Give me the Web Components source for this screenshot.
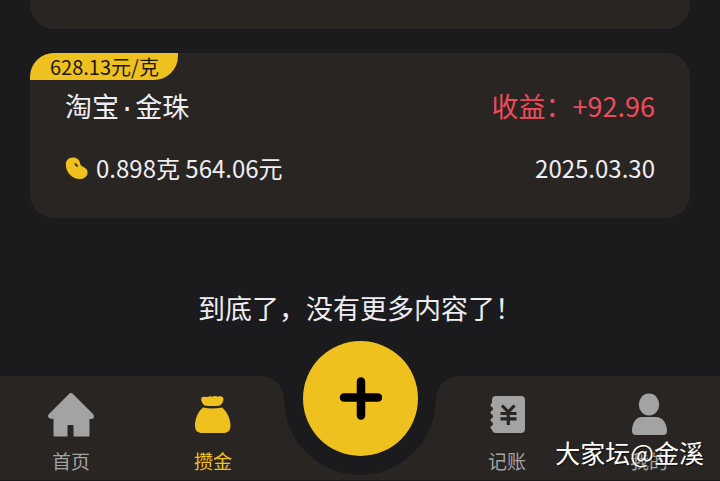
<!DOCTYPE html>
<html lang="zh-CN">
<head>
<meta charset="utf-8">
<meta name="viewport" content="width=device-width, initial-scale=1">
<title>攒金</title>
<style>
  html { background: #1b1b1e; }
  body {
    margin: 0;
    font-family: "Noto Sans CJK SC", sans-serif;
    color: #efedf2;
    --card: #292522;
    --gold: #eec11f;
    --muted: #a3a3a3;
  }
</style>
</head>
<body>
<gold-app>
  <gold-card continued></gold-card>
  <gold-card>
    <span slot="price">628.13元/克</span>
    <span slot="name">淘宝·金珠</span>
    <span slot="profit">收益：+92.96</span>
    <span slot="amount">0.898克 564.06元</span>
    <time slot="date" datetime="2025-03-30">2025.03.30</time>
  </gold-card>
  <list-end>到底了，没有更多内容了！</list-end>
  <tab-bar slot="nav">
    <tab-item icon="home">首页</tab-item>
    <tab-item icon="bag" active>攒金</tab-item>
    <add-button></add-button>
    <tab-item icon="ledger">记账</tab-item>
    <tab-item icon="person">我的</tab-item>
  </tab-bar>
  <water-mark slot="mark">大家坛@金溪</water-mark>
</gold-app>

<script>
const define = (name, html, setup) => {
  const template = document.createElement('template');
  template.innerHTML = html;
  customElements.define(name, class extends HTMLElement {
    constructor() {
      super();
      this.attachShadow({ mode: 'open' }).append(template.content.cloneNode(true));
    }
    connectedCallback() { if (setup) setup(this, this.shadowRoot); }
  });
};

define('gold-app', `
  <style>
    :host { display: flex; flex-direction: column; min-height: 100vh; position: relative; }
    main { flex: 1; display: flex; flex-direction: column; gap: 24px; padding: 0 30px 24px; }
  </style>
  <main><slot></slot></main>
  <slot name="nav"></slot>
  <slot name="mark"></slot>`);

define('gold-card', `
  <style>
    :host { display: block; background: var(--card); border-radius: 24px; overflow: hidden; padding-bottom: 32px; }
    :host([continued]) { border-radius: 0 0 24px 24px; padding-bottom: 29px; }
    :host([continued]) > * { display: none; }
    .badge { display: flex; width: fit-content; padding: 0 19px 0 20px; background: var(--gold); color: #1d1a12;
      font-size: 20px; line-height: 27px; border-radius: 0 0 24px 0; }
    .row { display: flex; justify-content: space-between; align-items: center; gap: 16px; padding: 0 35px; line-height: 36px; }
    .head { align-items: baseline; margin: 8px 0 22px; font-size: 27px; }
    .name { font-family: "Liberation Mono", "Noto Sans CJK SC", monospace; }
    .info { font-size: 24px; }
    .profit { color: #f04b5c; }
    .amount { display: flex; align-items: center; gap: 7px; }
    svg { width: 24px; height: 24px; flex: none; }
  </style>
  <div class="badge"><slot name="price"></slot></div>
  <div class="row head"><span class="name"><slot name="name"></slot></span><span class="profit"><slot name="profit"></slot></span></div>
  <div class="row info">
    <span class="amount">
      <svg viewBox="0 0 24 24" aria-hidden="true">
        <path fill="var(--gold)" d="M.800 8.500C.800 4.500 3.500 1.500 7.500 1.500C11.500 1.500 14.500 3.500 15 7C15.400 9.500 16.500 10 18.500 11C21.500 12.300 23 14.500 22.500 17.500C22 21 18.500 23 14.500 23C7 23 .800 16 .800 8.500Z"/>
        <path d="M10.500 8L12 10" stroke="#3a3012" stroke-width="2" stroke-linecap="round"/>
      </svg>
      <slot name="amount"></slot>
    </span>
    <slot name="date"></slot>
  </div>`);

define('list-end', `
  <style>:host { display: block; margin-top: 46px; text-align: center; font-size: 27px; line-height: 40px; }</style>
  <slot></slot>`);

define('tab-bar', `
  <style>
    :host { display: block; padding-bottom: 1px; }
    nav { display: grid; grid-template-columns: 1fr 1fr 152px 1fr 1fr; grid-template-rows: 104px; }
    .back { grid-area: 1 / 1 / 2 / -1; display: flex; }
    .back i { flex: 1; background: var(--card); }
    .back svg { width: 208px; height: 104px; flex: none; }
    .tabs { grid-area: 1 / 1 / 2 / -1; display: grid; grid-template-columns: subgrid; }
  </style>
  <nav>
    <div class="back" aria-hidden="true">
      <i></i>
      <svg viewBox="0 0 208 104"><path fill="var(--card)" d="M0 0C18 0 27 8 28 23A76 76 0 0 0 180 23C181 8 190 0 208 0V104H0Z"/></svg>
      <i></i>
    </div>
    <div class="tabs"><slot></slot></div>
  </nav>`);

const icons = {
  home: `<path d="M22 3Q24 1 26 3L46 23Q48 25.500 46 27.500Q45.500 28 42.500 28V44.500Q42.500 45.500 41.500 45.500H26.500V35Q26.500 34 25.500 34H21.500Q20.500 34 20.500 35V45.500H7.500Q6.500 45.500 6.500 44.500V28Q3 28 2 27Q0 25 2 23Z"/>`,
  bag: `<path d="M15.500 14.500C12.500 12 11.500 8.500 12.500 6.500C14 5 17 6 18.500 6C20 5 22 5 23.500 5.700C25.500 4.800 27.500 5 28.500 5.700C31 5 33.500 5 34.300 7C35 10 33 13 31 14.500Q23 15.500 15.500 14.500Z"/><path d="M14 16.500Q23.500 18.500 33 16.500C38 20.500 41.500 28 41.500 34.500C41.500 40 39 42 34 42H13.500C8.500 42 6 40 6 34.500C6 28 9 20.500 14 16.500Z"/>`,
  ledger: `<path d="M13 5H38Q42 5 42 9V38Q42 42 38 42H13Q9.500 42 9 38.500Q7.500 38 7.500 36.500Q7.500 35 9 34.700Q10 34 10 32.800Q10 31.500 9 31Q7.500 30.700 7.500 29Q7.500 27.500 9 27.200Q10 26.500 10 25.200Q10 24 9 23.500Q7.500 23.200 7.500 21.500Q7.500 20 9 19.700Q10 19 10 17.500Q10 16.500 9 16Q7.500 15.500 7.500 14Q7.500 12.500 9 12V9Q9 5 13 5Z"/><path fill="none" stroke="var(--card)" stroke-width="3.200" d="M19 14.500L25.300 21L31.500 14.500M25.300 21V34M17.500 22.500H33.500M17.500 27.800H33.500"/>`,
  person: `<ellipse cx="24" cy="13.500" rx="10.200" ry="11"/><path d="M17 26H31C37 26 42 32 42 40Q42 44 38 44H11Q7 44 7 40C7 32 11 26 17 26Z"/>`
};

define('tab-item', `
  <style>
    :host { display: block; }
    a { display: flex; flex-direction: column; align-items: center; gap: 10px; padding-top: 15px;
      color: var(--muted); text-decoration: none; font-size: 19px; line-height: 24px; }
    :host([active]) a { color: var(--gold); }
    svg { width: 48px; height: 48px; fill: currentColor; }
  </style>
  <a href="#"><svg viewBox="0 0 48 48" aria-hidden="true"></svg><span><slot></slot></span></a>`,
  (host, root) => {
    const icon = host.getAttribute('icon');
    root.querySelector('svg').innerHTML = icons[icon];
    root.querySelector('a').href = '#' + icon;
    if (host.hasAttribute('active')) root.querySelector('a').setAttribute('aria-current', 'page');
  });

define('add-button', `
  <style>
    :host { display: flex; justify-content: center; align-items: flex-start; margin-top: -35px; }
    button { display: grid; place-items: center; width: 115px; height: 115px; padding: 0; border: 0;
      border-radius: 50%; background: var(--gold); cursor: pointer; }
    svg { width: 44px; height: 44px; }
  </style>
  <button type="button" aria-label="添加">
    <svg viewBox="0 0 44 44" aria-hidden="true"><path d="M23 4.500V38.500M6 20.500H40" stroke="#000" stroke-width="8.500" stroke-linecap="round"/></svg>
  </button>`);

define('water-mark', `
  <style>
    :host { position: absolute; right: 16px; bottom: 11px; font-size: 25px; line-height: 36px; color: #fff;
      text-shadow: 1px 1px 1px rgba(0, 0, 0, .6); pointer-events: none; }
  </style>
  <slot></slot>`);
</script>
</body>
</html>
